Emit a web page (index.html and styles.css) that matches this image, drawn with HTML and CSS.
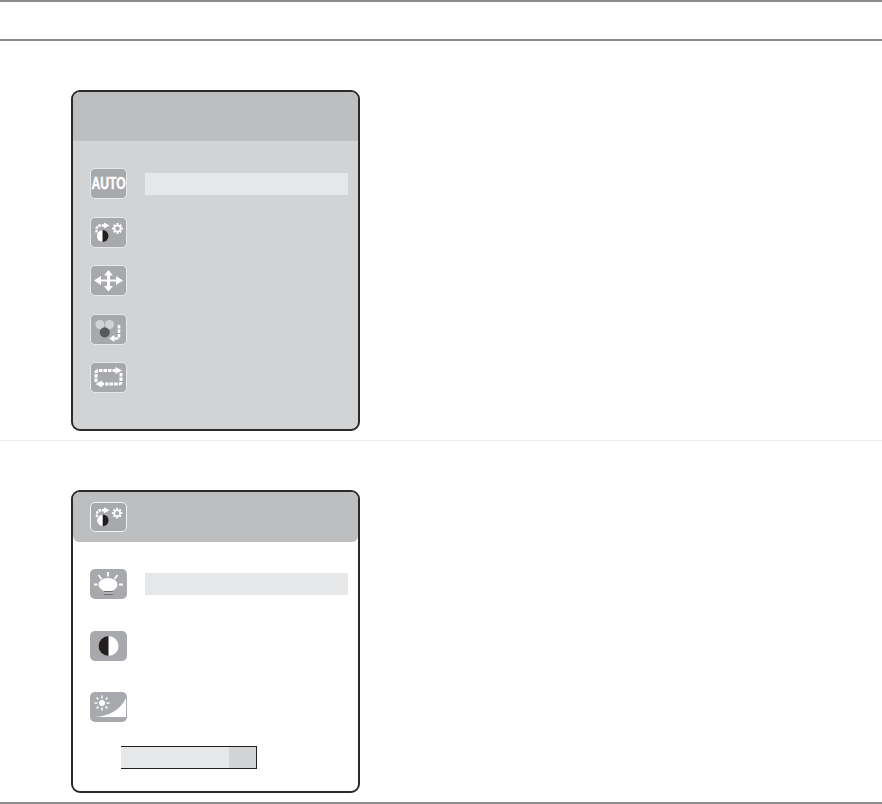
FILE: index.html
```html
<!DOCTYPE html>
<html lang="en">
<head>
  <meta charset="UTF-8">
  <title>OSD menu</title>
  <link rel="stylesheet" href="styles.css">
</head>
<body>
  <svg class="defs" width="0" height="0">
    <symbol id="icon-picture" viewBox="0 0 37 31">
      <path d="M6.500 15.500V12Q7 9 10 8.500H14.500" fill="none" stroke="#fff" stroke-width="2.400" stroke-dasharray="2.600 0.900"/>
      <path d="M14 5.500L19.500 8.500L14 11.500Z" fill="#fff"/>
      <circle cx="12.500" cy="19" r="6" fill="#231f20"/>
      <path d="M12.500 13A6 6 0 0 0 12.500 25Z" fill="#fff"/>
      <path d="M27.500 6V8.500M27.500 14.500V17M22 11.500H24.500M30.500 11.500H33M23.700 7.700L25.500 9.500M29.500 13.500L31.300 15.300M31.300 7.700L29.500 9.500M25.500 13.500L23.700 15.300" stroke="#fff" stroke-width="2"/>
      <circle cx="27.500" cy="11.500" r="3" fill="none" stroke="#fff" stroke-width="1.500"/>
    </symbol>
  </svg>

  <div class="rule rule-top"></div>
  <div class="rule rule-second"></div>

  <section class="block block-main">
    <div class="panel panel-main">
      <div class="panel-head"></div>
      <div class="panel-body">
        <div class="row">
          <span class="tile tile-line"><span class="auto-label">AUTO</span></span>
          <div class="highlight"></div>
        </div>
        <div class="row">
          <span class="tile tile-line"><svg width="35" height="29" viewBox="1 1 35 29"><use href="#icon-picture" width="37" height="31"/></svg></span>
        </div>
        <div class="row">
          <span class="tile tile-line">
            <svg width="35" height="29" viewBox="1 1 35 29">
              <path d="M18.500 5L23 10.500H20V14.500H26V11L33 15.500L26 20V16.500H20V21H23L18.500 26.500L14 21H17V16.500H11V20L4 15.500L11 11V14.500H17V10.500H14Z" fill="#fff"/>
            </svg>
          </span>
        </div>
        <div class="row">
          <span class="tile tile-line">
            <svg width="35" height="29" viewBox="1 1 35 29">
              <circle cx="10" cy="10.500" r="4.500" fill="#d1d3d4"/>
              <circle cx="19.500" cy="10.500" r="4.500" fill="#d1d3d4"/>
              <circle cx="14.700" cy="18.500" r="5" fill="#58595b"/>
              <path d="M29 11V22Q29 24.500 26.500 24.500H24" fill="none" stroke="#fff" stroke-width="2.600" stroke-dasharray="3.500 1"/>
              <path d="M24.500 21L19 24.500L24.500 28Z" fill="#fff"/>
            </svg>
          </span>
        </div>
        <div class="row">
          <span class="tile tile-line">
            <svg width="35" height="29" viewBox="1 1 35 29">
              <path d="M6 20V11Q6 8.500 8.500 8.500H26" fill="none" stroke="#fff" stroke-width="3" stroke-dasharray="3.500 1"/>
              <path d="M25.500 5L32 8.500L25.500 12Z" fill="#fff"/>
              <path d="M31 11V20Q31 22 28.500 22H11.500" fill="none" stroke="#fff" stroke-width="3" stroke-dasharray="3.500 1"/>
              <path d="M12 18.500L5.500 22L12 25.500Z" fill="#fff"/>
            </svg>
          </span>
        </div>
      </div>
    </div>
  </section>

  <div class="divider"></div>

  <section class="block block-sub">
    <div class="panel panel-sub">
      <div class="panel-head">
        <span class="tile tile-line tile-head"><svg width="35" height="28" viewBox="1 1 35 29"><use href="#icon-picture" width="37" height="31"/></svg></span>
      </div>
      <div class="panel-body">
        <div class="row">
          <span class="tile">
            <svg width="37" height="30" viewBox="0 0 37 30">
              <path d="M18 9C23.500 9 27.500 12 27.500 16C27.500 18.500 25 20 22.500 22H13.500C11 20 8.500 18.500 8.500 16C8.500 12 12.500 9 18 9Z" fill="#fff"/>
              <path d="M14 23H23M14 25H23" stroke="#231f20" stroke-width="0.900"/>
              <path d="M14 24H23" stroke="#fff" stroke-width="1"/>
              <path d="M18 3V7.500M8.500 6L11.500 10M27.500 6L24.500 10M4 15.500H7.500M29 15.500H33" stroke="#fff" stroke-width="1.800"/>
            </svg>
          </span>
          <div class="highlight"></div>
        </div>
        <div class="row">
          <span class="tile">
            <svg width="37" height="30" viewBox="0 0 37 30">
              <circle cx="18.500" cy="15" r="10" fill="#fff"/>
              <path d="M18.500 5A10 10 0 0 0 18.500 25Z" fill="#231f20"/>
            </svg>
          </span>
        </div>
        <div class="row">
          <span class="tile">
            <svg width="37" height="30" viewBox="0 0 37 30">
              <path d="M5 25C18 24 30 19 36 6V25Z" fill="#fff"/>
              <circle cx="12" cy="11" r="3" fill="#fff"/>
              <path d="M12 3.500V6.500M12 15.500V18.500M4.500 11H7.500M16.500 11H19.500M6.500 5.500L8.500 7.500M15.500 14.500L17.500 16.500M17.500 5.500L15.500 7.500M8.500 14.500L6.500 16.500" stroke="#fff" stroke-width="1.500"/>
            </svg>
          </span>
        </div>
        <div class="slider"><div class="slider-fill" style="width: 108px"></div></div>
      </div>
    </div>
  </section>

  <div class="rule rule-bottom"></div>
</body>
</html>
```

FILE: styles.css
```css
html, body {
  margin: 0;
  padding: 0;
}
body {
  width: 882px;
  height: 804px;
  background: #fff;
  overflow: hidden;
  font-family: "Liberation Sans", Arial, sans-serif;
}
.defs {
  display: block;
  height: 0;
}
.rule {
  height: 2px;
  background: #8c8c8e;
}
.rule-second {
  margin-top: 37px;
}
.rule-bottom {
  margin-top: 9px;
}
.block {
  padding-left: 71px;
}
.block-main {
  padding-top: 49px;
}
.block-sub {
  padding-top: 49px;
}
.divider {
  height: 1px;
  margin-top: 9px;
  background: #ececed;
}
.panel {
  box-sizing: border-box;
  width: 289px;
  border: 2px solid #2b292a;
  border-radius: 9px;
  overflow: hidden;
}
.panel-main {
  height: 341px;
  background: #d1d3d4;
}
.panel-sub {
  height: 303px;
  background: #fff;
}
.panel-head {
  background: #bcbec0;
  height: 49px;
}
.panel-sub .panel-head {
  height: 50px;
  display: flex;
  align-items: center;
  padding-left: 17px;
  border-radius: 0 0 6px 6px;
}
.panel-body {
  display: flex;
  flex-direction: column;
  padding: 27px 10px 0 17px;
}
.panel-main .panel-body {
  gap: 17.5px;
}
.panel-sub .panel-body {
  gap: 31.5px;
}
.row {
  display: flex;
  align-items: center;
  gap: 18px;
}
.tile {
  box-sizing: border-box;
  flex: none;
  display: flex;
  align-items: center;
  justify-content: center;
  width: 37px;
  height: 30px;
  border-radius: 5px;
  background: #a7a9ac;
  color: #fff;
}
.tile-line {
  height: 31px;
  border: 1px solid #e6e7e8;
}
.tile-head {
  height: 30px;
  border-color: #f1f2f2;
}
.auto-label {
  font-size: 16px;
  font-weight: bold;
  transform: scaleX(0.76);
  -webkit-text-stroke: 0.4px #fff;
}
.highlight {
  flex: 1;
  height: 22px;
  background: #e6e7e8;
}
.slider {
  box-sizing: border-box;
  width: 136px;
  height: 23px;
  margin: -7.5px 0 0 31px;
  background: #d1d3d4;
  border: 1px solid #231f20;
  border-left: 0;
}
.slider-fill {
  height: 100%;
  background: #e6e7e8;
}
```
